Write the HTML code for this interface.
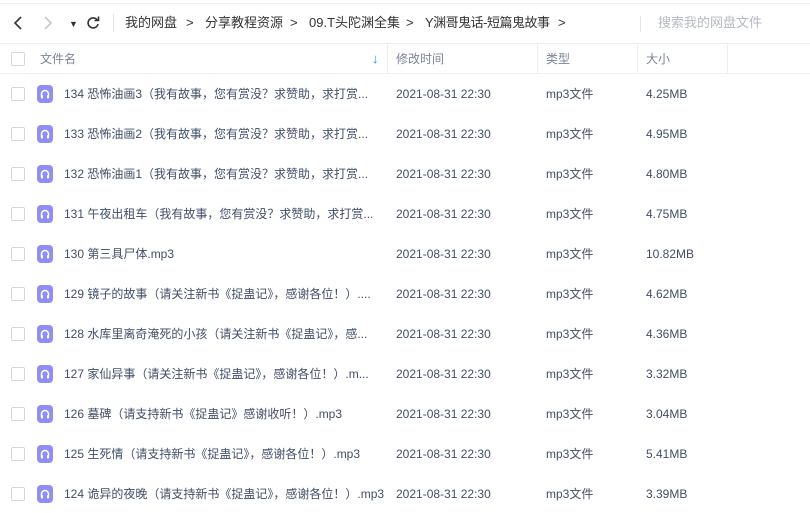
<!DOCTYPE html><html><head><meta charset="utf-8"><style>
body{margin:0;width:810px;height:513px;background:#fff;font-family:"Liberation Sans","Noto Sans CJK SC",sans-serif;font-size:12px;color:#424e67;position:relative;overflow:hidden}
.a{position:absolute;white-space:nowrap;line-height:16px}
.cb{position:absolute;left:11px;width:12px;height:12px;border:1px solid #d4d7de;border-radius:2px;background:#fff}
.ic{position:absolute;left:37px;width:16px;height:18px;border-radius:4px;background:#8e8ef5}
.g{color:#424e67}
.bc{position:absolute;top:15px;font-size:13px;color:#333;line-height:16px;white-space:nowrap}
</style></head><body>
<div class="a" style="left:0;top:3px;width:810px;height:1px;background:#eceef2"></div>
<svg class="a" style="left:13px;top:16px" width="10" height="14"><path d="M8 1L2 7l6 6" fill="none" stroke="#333" stroke-width="1.6"/></svg>
<svg class="a" style="left:43px;top:16px" width="10" height="14"><path d="M2 1l6 6-6 6" fill="none" stroke="#c8c8c8" stroke-width="1.6"/></svg>
<div class="a" style="left:69px;top:16px;font-size:9px;color:#333">▼</div>
<svg class="a" style="left:86px;top:16px" width="14" height="14"><path d="M11.5 4.5A5 5 0 1 0 12 8" fill="none" stroke="#333" stroke-width="1.6"/><path d="M8.5 4.5h4v-4" fill="none" stroke="#333" stroke-width="1.6"/></svg>
<div class="a" style="left:113px;top:14px;width:1px;height:18px;background:#e2e4e8"></div>
<div class="bc" style="left:125px">我的网盘</div>
<div class="bc" style="left:186px">&gt;</div>
<div class="bc" style="left:205px">分享教程资源</div>
<div class="bc" style="left:290px">&gt;</div>
<div class="bc" style="left:309px">09.T头陀渊全集</div>
<div class="bc" style="left:406px">&gt;</div>
<div class="bc" style="left:425px;letter-spacing:-0.5px">Y渊哥鬼话-短篇鬼故事</div>
<div class="bc" style="left:558px">&gt;</div>
<div class="a" style="left:640px;top:16px;width:1px;height:16px;background:#e2e4e8"></div>
<div class="bc" style="left:658px;color:#b5b9c2">搜索我的网盘文件</div>
<div class="a" style="left:0;top:43px;width:810px;height:1px;background:#eceef2"></div>
<div class="a" style="left:0;top:73px;width:810px;height:1px;background:#f0f1f4"></div>
<div class="cb" style="top:52px"></div>
<div class="a" style="left:40px;top:51px;color:#7c8496">文件名</div>
<div class="a" style="left:372px;top:51px;color:#1a8cff;font-size:13px;font-weight:bold">↓</div>
<div class="a" style="left:387px;top:44px;width:1px;height:29px;background:#eceef2"></div>
<div class="a" style="left:396px;top:51px;color:#7c8496">修改时间</div>
<div class="a" style="left:537px;top:44px;width:1px;height:29px;background:#eceef2"></div>
<div class="a" style="left:546px;top:51px;color:#7c8496">类型</div>
<div class="a" style="left:637px;top:44px;width:1px;height:29px;background:#eceef2"></div>
<div class="a" style="left:646px;top:51px;color:#7c8496">大小</div>
<div class="a" style="left:727px;top:44px;width:1px;height:29px;background:#eceef2"></div>
<div id="rows"></div>
<script>
var d=[["134 恐怖油画3（我有故事，您有赏没？求赞助，求打赏...","4.25MB"],["133 恐怖油画2（我有故事，您有赏没？求赞助，求打赏...","4.95MB"],["132 恐怖油画1（我有故事，您有赏没？求赞助，求打赏...","4.80MB"],["131 午夜出租车（我有故事，您有赏没？求赞助，求打赏...","4.75MB"],["130 第三具尸体.mp3","10.82MB"],["129 镜子的故事（请关注新书《捉蛊记》，感谢各位！）....","4.62MB"],["128 水库里离奇淹死的小孩（请关注新书《捉蛊记》，感...","4.36MB"],["127 家仙异事（请关注新书《捉蛊记》，感谢各位！）.m...","3.32MB"],["126 墓碑（请支持新书《捉蛊记》感谢收听！）.mp3","3.04MB"],["125 生死情（请支持新书《捉蛊记》，感谢各位！）.mp3","5.41MB"],["124 诡异的夜晚（请支持新书《捉蛊记》，感谢各位！）.mp3","3.39MB"]];
var h="";d.forEach(function(r,i){var c=94+40*i;
h+='<div class="cb" style="top:'+(c-7)+'px"></div><div class="ic" style="top:'+(c-9)+'px"><svg width="16" height="18"><path d="M4.5 12V9a3.5 3.5 0 0 1 7 0v3" fill="none" stroke="#fff" stroke-width="1.5"/><rect x="4" y="10" width="2" height="3.5" rx=".8" fill="#fff"/><rect x="10" y="10" width="2" height="3.5" rx=".8" fill="#fff"/></svg></div>'+
'<div class="a g" style="left:64px;top:'+(c-8)+'px">'+r[0]+'</div><div class="a g" style="left:396px;top:'+(c-8)+'px">2021-08-31 22:30</div><div class="a g" style="left:546px;top:'+(c-8)+'px">mp3文件</div><div class="a g" style="left:646px;top:'+(c-8)+'px">'+r[1]+'</div>';});
document.getElementById("rows").innerHTML=h;
</script>
</body></html>
